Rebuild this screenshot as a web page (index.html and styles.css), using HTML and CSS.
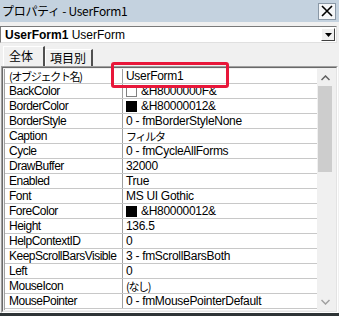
FILE: index.html
```html
<!DOCTYPE html>
<html lang="ja">
<head>
<meta charset="utf-8">
<title>プロパティ - UserForm1</title>
<link rel="stylesheet" href="styles.css">
</head>
<body>
<div class="window">
  <div class="titlebar">
    <span class="title">プロパティ - UserForm1</span>
    <span class="close"><svg width="12" height="12" viewBox="0 0 12 12"><path d="M1 1L11 11M11 1L1 11" stroke="#000" stroke-width="1.6"/></svg></span>
  </div>
  <div class="combo">
    <span class="combo-text"><b>UserForm1</b> UserForm</span>
    <span class="combo-btn"><svg width="7" height="4" viewBox="0 0 7 4"><path d="M0 0H7L3.5 4Z" fill="#000"/></svg></span>
  </div>
  <div class="tabs">
    <span class="tab tab-active">全体</span>
    <span class="tab">項目別</span>
  </div>
  <div class="frame">
    <div class="grid">
      <div class="rows">
        <div class="row"><span class="name"><span class="jp">(オブジェクト名)</span></span><span class="val">UserForm1</span></div>
        <div class="row"><span class="name">BackColor</span><span class="val"><i class="sw sw-white"></i>&amp;H8000000F&amp;</span></div>
        <div class="row"><span class="name">BorderColor</span><span class="val"><i class="sw sw-black"></i>&amp;H80000012&amp;</span></div>
        <div class="row"><span class="name">BorderStyle</span><span class="val">0 - fmBorderStyleNone</span></div>
        <div class="row"><span class="name">Caption</span><span class="val"><span class="jp">フィルタ</span></span></div>
        <div class="row"><span class="name">Cycle</span><span class="val">0 - fmCycleAllForms</span></div>
        <div class="row"><span class="name">DrawBuffer</span><span class="val">32000</span></div>
        <div class="row"><span class="name">Enabled</span><span class="val">True</span></div>
        <div class="row"><span class="name">Font</span><span class="val">MS UI Gothic</span></div>
        <div class="row"><span class="name">ForeColor</span><span class="val"><i class="sw sw-black"></i>&amp;H80000012&amp;</span></div>
        <div class="row"><span class="name">Height</span><span class="val">136.5</span></div>
        <div class="row"><span class="name">HelpContextID</span><span class="val">0</span></div>
        <div class="row"><span class="name">KeepScrollBarsVisible</span><span class="val">3 - fmScrollBarsBoth</span></div>
        <div class="row"><span class="name">Left</span><span class="val">0</span></div>
        <div class="row"><span class="name">MouseIcon</span><span class="val"><span class="jp">(なし)</span></span></div>
        <div class="row"><span class="name">MousePointer</span><span class="val">0 - fmMousePointerDefault</span></div>
      </div>
      <div class="scrollbar">
        <span class="sb-arrow"><svg width="9" height="6" viewBox="0 0 9 6"><path d="M0.5 5L4.5 1L8.5 5" fill="none" stroke="#606060" stroke-width="1.5"/></svg></span>
        <span class="sb-thumb"></span>
        <span class="sb-track"></span>
        <span class="sb-arrow"><svg width="9" height="6" viewBox="0 0 9 6"><path d="M0.5 1L4.5 5L8.5 1" fill="none" stroke="#a0a0a0" stroke-width="1.5"/></svg></span>
      </div>
    </div>
  </div>
  <div class="taskbar"></div>
  <div class="highlight"></div>
</div>
</body>
</html>
```
FILE: styles.css
```css
* { box-sizing: border-box; }
html, body { margin: 0; padding: 0; }
body {
  width: 339px;
  height: 316px;
  overflow: hidden;
  background: #f0f0f0;
  font-family: "Liberation Sans", "Noto Sans CJK JP", sans-serif;
  font-size: 12px;
  color: #000;
}
.window { position: relative; width: 339px; height: 316px; display: flex; flex-direction: column; }
.titlebar {
  height: 22px;
  background: #c4d2df;
  display: flex;
  align-items: center;
  justify-content: space-between;
  padding-left: 2px;
  padding-right: 3px;
}
.title { font-family: "Noto Sans CJK JP", sans-serif; font-size: 12px; letter-spacing: -0.3px; line-height: 16px; }
.close {
  width: 18px;
  height: 17px;
  background: #f4f6f8;
  border: 1px solid #8a98a6;
  display: flex;
  align-items: center;
  justify-content: center;
}
.combo {
  margin-top: 4px;
  height: 17px;
  background: #fff;
  border: 1px solid #7a7a7a;
  border-right-color: #e0e0e0;
  border-bottom-color: #e0e0e0;
  margin-right: 2px;
  display: flex;
  align-items: center;
  justify-content: space-between;
  padding-left: 4px;
  padding-right: 1px;
}
.combo-text { font-size: 12px; line-height: 14px; }
.combo-btn {
  width: 14px;
  height: 13px;
  background: #f0f0f0;
  border: 1px solid #fff;
  border-right-color: #404040;
  border-bottom-color: #404040;
  display: flex;
  align-items: center;
  justify-content: center;
}
.tabs {
  margin-top: 2px;
  height: 21px;
  display: flex;
  align-items: flex-end;
  padding-left: 3px;
}
.tab {
  height: 17px;
  padding: 0 5px 0 4px;
  font-family: "Noto Sans CJK JP", sans-serif;
  font-size: 12px;
  line-height: 16px;
  border-top: 1px solid #fff;
  border-left: 1px solid #fff;
  border-right: 2px solid #505050;
}
.tab-active { height: 20px; width: 42px; padding-left: 5px; line-height: 18px; }
.frame {
  margin: 0 1px;
  height: 247px;
  border: 1px solid #a0a0a0;
  border-right-color: #fff;
  border-bottom-color: #fff;
}
.grid {
  height: 100%;
  border: 1px solid #696969;
  border-right-color: #e3e3e3;
  border-bottom-color: #e3e3e3;
  padding: 1px 3px 1px 1px;
  display: flex;
  background: #f0f0f0;
}
.rows { flex: 1; background: #fff; border-left: 1px solid #a0a0a0; }
.row {
  height: 15px;
  display: flex;
  align-items: center;
  border-bottom: 1px solid #c8c8c8;
  line-height: 14px;
  white-space: nowrap;
}
.name {
  width: 118px;
  height: 14px;
  flex: none;
  padding-left: 4px;
  letter-spacing: -0.5px;
  border-right: 1px solid #a0a0a0;
  display: flex;
  align-items: center;
}
.val { padding-left: 3px; display: flex; align-items: center; letter-spacing: -0.3px; }
.jp { font-family: "Noto Sans CJK JP", sans-serif; font-size: 11px; letter-spacing: -1.3px; line-height: 14px; }
.sw { display: inline-block; width: 11px; height: 11px; margin-right: 4px; border: 1px solid #808080; }
.sw-white { background: #fff; }
.sw-black { background: #000; border-color: #000; }
.scrollbar { width: 16px; display: flex; flex-direction: column; background: #f0f0f0; }
.sb-arrow { height: 17px; display: flex; align-items: center; justify-content: center; flex: none; }
.sb-thumb { height: 86px; margin: 0 1px; background: #cdcdcd; flex: none; }
.sb-track { flex: 1; }
.taskbar { flex: 1; background: #2e3436; }
.highlight {
  position: absolute;
  left: 111px;
  top: 62px;
  width: 118px;
  height: 26px;
  border: 3px solid #e8173a;
  border-radius: 3px;
}
```
